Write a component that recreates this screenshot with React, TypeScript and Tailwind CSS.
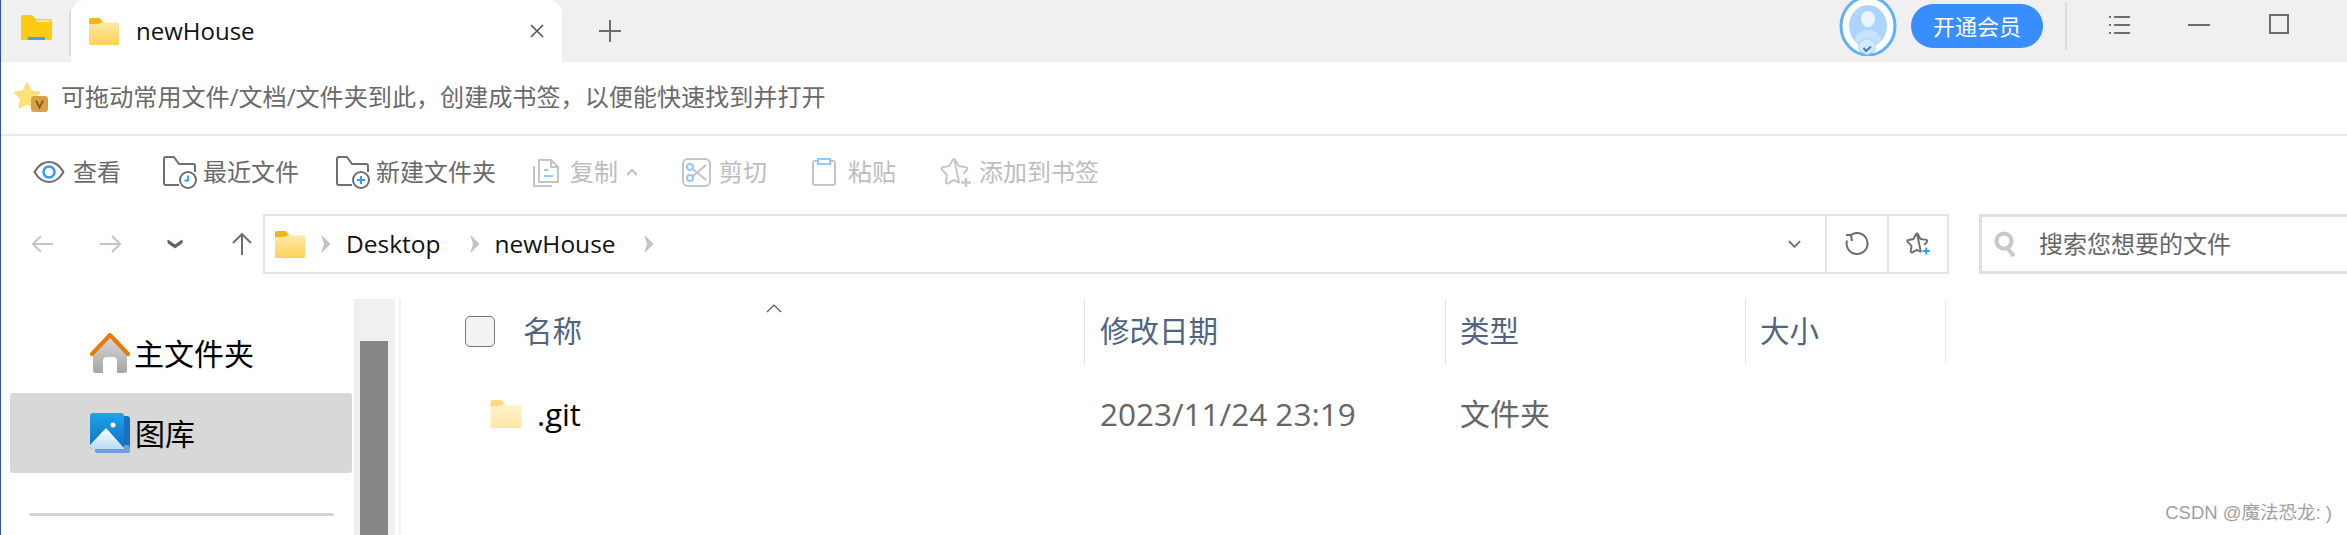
import type { ReactNode } from "react";

function TabFolder({ pale = false, className = "" }: { pale?: boolean; className?: string }) {
  const id = pale ? "folderPale" : "folderGold";
  return (
    <svg viewBox="0 0 30 27" className={className}>
      <defs>
        <linearGradient id={id} x1="0" y1="0" x2="0" y2="1">
          <stop offset="0" stopColor={pale ? "#fff3cf" : "#ffe9a6"} />
          <stop offset="1" stopColor={pale ? "#ffe6a6" : "#fdd25a"} />
        </linearGradient>
      </defs>
      <path d="M0 2a2 2 0 0 1 2-2h7.5c1 0 1.8.5 2.4 1.2L14 4v3H0z" fill={pale ? "#fcd882" : "#f6b611"} />
      <path d="M0 7c0-.5.4-1 1-1h8l3-1.500h17a1 1 0 0 1 1 1V26a1 1 0 0 1-1 1H1a1 1 0 0 1-1-1z" fill={`url(#${id})`} />
    </svg>
  );
}

function AppFolder() {
  return (
    <svg viewBox="0 0 31 25" className="h-[25px] w-[31px]">
      <path d="M0 2a2 2 0 0 1 2-2h9l4 4h14a2 2 0 0 1 2 2v17a2 2 0 0 1-2 2H2a2 2 0 0 1-2-2z" fill="#ffcb12" />
      <path d="M14 5h15v2H16z" fill="#ffe88a" />
      <path d="M7 22h17v3H7z" fill="#4b9df2" />
    </svg>
  );
}

function BookmarkStar() {
  return (
    <svg viewBox="0 0 34 30" className="h-[30px] w-[34px]">
      <path d="M13 1l4 8 9 1.500-6.500 6.500 1.500 9-8-4.200-8 4.200 1.500-9L0 10.500 9 9z" fill="#ffe27a" stroke="#ffd75c" strokeLinejoin="round" />
      <rect x="17" y="14" width="17" height="16" rx="3" fill="#d9a045" />
      <path d="M22 18.500l3.500 7 3.500-7" fill="none" stroke="#8a5a14" strokeWidth="1.800" />
    </svg>
  );
}

function Avatar() {
  return (
    <svg viewBox="0 0 58 56" className="h-[56px] w-[58px]">
      <ellipse cx="29" cy="26" rx="27" ry="29" fill="#fff" stroke="#63b0fa" strokeWidth="3" />
      <ellipse cx="29" cy="26" rx="19" ry="21" fill="#acd6ff" />
      <ellipse cx="29" cy="19" rx="7" ry="8" fill="#e8f4ff" />
      <path d="M16 40c2-8 8-10 13-10s11 2 13 10c-4 5-22 5-26 0z" fill="#c6e2ff" />
      <path d="M28 43l8 4.500v8L28 60l-8-4.500v-8z" fill="#d4eaff" stroke="#9fcfff" transform="translate(0 -5)" />
      <path d="M24.500 48l2.500 3 5-4.500" fill="none" stroke="#3f7fc0" strokeWidth="2" />
    </svg>
  );
}

function EyeIcon() {
  return (
    <svg viewBox="0 0 32 24" className="h-[24px] w-[32px]">
      <path d="M1.500 12C5 6 10 2 16 2s11 4 14.500 10C27 18 22 22 16 22S5 18 1.500 12z" fill="none" stroke="#6b6b6b" strokeWidth="2" strokeLinejoin="round" />
      <circle cx="16" cy="12" r="5.500" fill="none" stroke="#2f9bff" strokeWidth="2.500" />
    </svg>
  );
}

function FolderBadge({ plus = false }: { plus?: boolean }) {
  return (
    <svg viewBox="0 0 34 33" className="h-[33px] w-[34px]">
      <path d="M16 29H3a2 2 0 0 1-2-2V3a2 2 0 0 1 2-2h8l5 7h14a2 2 0 0 1 2 2v6" fill="none" stroke="#6f6f6f" strokeWidth="2" strokeLinejoin="round" />
      <circle cx="25" cy="24" r="8" fill="#fff" stroke="#6f6f6f" strokeWidth="2" />
      {plus ? (
        <path d="M25 20v8M21 24h8" stroke="#2f9bff" strokeWidth="2" />
      ) : (
        <path d="M25 19.500v5h-3.500" fill="none" stroke="#2f9bff" strokeWidth="1.800" />
      )}
    </svg>
  );
}

function CopyIcon() {
  return (
    <svg viewBox="0 0 27 30" className="h-[30px] w-[27px]">
      <path d="M6 3h12l7 7v15H6z" fill="none" stroke="#c4c4c4" strokeWidth="2" strokeLinejoin="round" />
      <path d="M18 3v7h7" fill="none" stroke="#c4c4c4" strokeWidth="2" />
      <path d="M1 9v20h18" fill="none" stroke="#c4c4c4" strokeWidth="2" />
      <path d="M11 13h4M11 19h9" stroke="#8ccbff" strokeWidth="2" />
    </svg>
  );
}

function ScissorsIcon() {
  return (
    <svg viewBox="0 0 29 29" className="h-[29px] w-[29px]">
      <rect x="1" y="1" width="27" height="27" rx="5" fill="none" stroke="#c4c4c4" strokeWidth="2" />
      <circle cx="8" cy="9" r="3" fill="none" stroke="#8ccbff" strokeWidth="2" />
      <circle cx="8" cy="20" r="3" fill="none" stroke="#8ccbff" strokeWidth="2" />
      <path d="M11 11l13 11M11 18L24 7" fill="none" stroke="#c4c4c4" strokeWidth="2" />
    </svg>
  );
}

function ClipboardIcon() {
  return (
    <svg viewBox="0 0 24 28" className="h-[28px] w-[24px]">
      <rect x="1" y="3" width="22" height="24" rx="2" fill="none" stroke="#c4c4c4" strokeWidth="2" />
      <rect x="6" y="1" width="12" height="5" fill="#fff" stroke="#8ccbff" strokeWidth="2" />
    </svg>
  );
}

function StarPlus({ blue = false }: { blue?: boolean }) {
  const stroke = blue ? "#6f6f6f" : "#c8c8c8";
  return (
    <svg viewBox="0 0 32 31" className={blue ? "h-[24px] w-[25px]" : "h-[31px] w-[32px]"}>
      <path
        d="M14 2c.6 0 1 .4 1.300 1L18.500 9l7.500 1.200c1.500.3 1.800 1.700.8 2.800L24 16M19 25.500l-5-2.500-6 3.300c-1.200.6-2.300-.2-2.100-1.500L7 18l-5-5.200c-.9-1-.4-2.300.9-2.500l6.600-1.200 3-6C12.900 2.400 13.400 2 14 2z"
        fill="none"
        stroke={stroke}
        strokeWidth={blue ? 2.500 : 2}
        strokeLinejoin="round"
        strokeLinecap="round"
      />
      <path d={blue ? "M26 20v9M21.500 24.500h9" : "M26 21v9M21 25.500h10"} stroke={blue ? "#2f9bff" : "#c8c8c8"} strokeWidth="2.500" />
    </svg>
  );
}

function Crumb() {
  return (
    <svg viewBox="0 0 10 16" className="h-[16px] w-[10px]">
      <path d="M1 0l8 8-8 8 2.500-8z" fill="#c4c4c4" stroke="#c4c4c4" strokeWidth="1" strokeLinejoin="round" />
    </svg>
  );
}

function HomeIcon() {
  return (
    <svg viewBox="0 0 40 40" className="h-[40px] w-[40px]">
      <defs>
        <linearGradient id="homeBody" x1="0" y1="0" x2="0" y2="1">
          <stop offset="0" stopColor="#d8d8d8" />
          <stop offset="1" stopColor="#a6a6a6" />
        </linearGradient>
      </defs>
      <path d="M3 20L20 4l17 16v17a3 3 0 0 1-3 3h-7V28a4 4 0 0 0-4-4h-6a4 4 0 0 0-4 4v12H6a3 3 0 0 1-3-3z" fill="url(#homeBody)" />
      <path d="M2 21L20 2l18 19" fill="none" stroke="#e97a06" strokeWidth="4" strokeLinecap="round" strokeLinejoin="round" />
    </svg>
  );
}

function GalleryIcon() {
  return (
    <svg viewBox="0 0 40 40" className="h-[40px] w-[40px]">
      <defs>
        <linearGradient id="galSky" x1="0" y1="0" x2="0" y2="1">
          <stop offset="0" stopColor="#1fa4ea" />
          <stop offset="1" stopColor="#0b6fc4" />
        </linearGradient>
        <linearGradient id="galHill" x1="0" y1="0" x2="0" y2="1">
          <stop offset="0" stopColor="#ffffff" />
          <stop offset="1" stopColor="#b9dcf8" />
        </linearGradient>
      </defs>
      <rect x="5" y="3" width="35" height="37" rx="3" fill="#1a6fc0" />
      <rect x="5" y="32" width="35" height="8" rx="3" fill="#6aa2d8" />
      <rect x="0" y="0" width="34" height="36" rx="3" fill="url(#galSky)" />
      <circle cx="23" cy="12" r="2.500" fill="#fff" />
      <path d="M0 32l16-17 18 20v1H3a3 3 0 0 1-3-3z" fill="url(#galHill)" />
    </svg>
  );
}

function ToolItem({ icon, label, gap = "gap-[8px]", off = false, className = "" }: { icon: ReactNode; label: string; gap?: string; off?: boolean; className?: string }) {
  return (
    <div className={`flex items-center ${gap} ${className}`}>
      {icon}
      <span className={`text-[24px] leading-none ${off ? "text-[#bdbdbd]" : "text-[#6a6a6a]"}`}>{label}</span>
    </div>
  );
}

export default function App() {
  return (
    <div className="relative flex h-[535px] w-[2347px] flex-col overflow-hidden border-l border-[#3350a8] bg-white font-['Open_Sans','Noto_Sans_CJK_SC',sans-serif]">
      {/* Title bar */}
      <div className="flex h-[62px] items-stretch bg-[#f0f0f0]">
        <div className="flex items-start pl-[20px] pt-[15px]">
          <AppFolder />
        </div>
        <div className="ml-[17px] mt-[10px] h-[46px] w-[2px] bg-[#dcdcdc]" />
        <div className="flex w-[491px] items-center rounded-t-[14px] bg-white pl-[18px]">
          <TabFolder className="h-[27px] w-[30px]" />
          <span className="ml-[17px] text-[24px] text-[#111]">newHouse</span>
          <svg viewBox="0 0 14 14" className="ml-auto mr-[18px] h-[14px] w-[14px]">
            <path d="M1 1l12 12M13 1L1 13" stroke="#555" strokeWidth="1.600" />
          </svg>
        </div>
        <div className="ml-[37px] flex items-center">
          <svg viewBox="0 0 22 22" className="h-[22px] w-[22px]">
            <path d="M11 0v22M0 11h22" stroke="#6d6d6d" strokeWidth="2" />
          </svg>
        </div>
        <div className="ml-auto flex items-start pr-[58px]">
          <Avatar />
          <div className="ml-[14px] mt-[4px] flex h-[44px] w-[132px] items-center justify-center rounded-full bg-[#388eff] text-[22px] text-white">
            开通会员
          </div>
          <div className="ml-[22px] mt-[2px] h-[48px] w-[2px] bg-[#dcdcdc]" />
          <svg viewBox="0 0 21 18" className="ml-[42px] mt-[16px] h-[18px] w-[21px]">
            <path d="M0 1h2M5 1h16M0 9h2M5 9h16M0 17h2M5 17h16" stroke="#6d6d6d" strokeWidth="2" />
          </svg>
          <div className="ml-[58px] mt-[24px] h-[2px] w-[22px] bg-[#6d6d6d]" />
          <div className="ml-[59px] mt-[14px] h-[20px] w-[20px] border-2 border-[#6d6d6d]" />
        </div>
      </div>

      {/* Bookmark hint */}
      <div className="flex h-[74px] items-center border-b-2 border-[#e8e8e8] pb-[2px] pl-[13px]">
        <BookmarkStar />
        <span className="ml-[13px] text-[24.1px] text-[#6a6a6a]">可拖动常用文件/文档/文件夹到此，创建成书签，以便能快速找到并打开</span>
      </div>

      {/* Toolbar */}
      <div className="flex h-[78px] items-center pb-[6px] pl-[32px]">
        <ToolItem icon={<EyeIcon />} label="查看" gap="gap-[8px]" />
        <ToolItem icon={<FolderBadge />} label="最近文件" gap="gap-[6px]" className="ml-[42px]" />
        <ToolItem icon={<FolderBadge plus />} label="新建文件夹" gap="gap-[6px]" className="ml-[37px]" />
        <ToolItem icon={<CopyIcon />} label="复制" gap="gap-[10px]" off className="ml-[37px]" />
        <svg viewBox="0 0 12 7" className="ml-[8px] h-[7px] w-[12px]">
          <path d="M1 6l5-5 5 5" fill="none" stroke="#bdbdbd" strokeWidth="2" />
        </svg>
        <ToolItem icon={<ScissorsIcon />} label="剪切" gap="gap-[8px]" off className="ml-[44px]" />
        <ToolItem icon={<ClipboardIcon />} label="粘贴" gap="gap-[12px]" off className="ml-[45px]" />
        <ToolItem icon={<StarPlus />} label="添加到书签" gap="gap-[7px]" off className="ml-[44px]" />
      </div>

      {/* Address row */}
      <div className="flex h-[60px] items-center pl-[31px]">
        <svg viewBox="0 0 22 18" className="h-[18px] w-[22px]">
          <path d="M21 9H1M9 1L1 9l8 8" fill="none" stroke="#c4c4c4" strokeWidth="2" />
        </svg>
        <svg viewBox="0 0 22 18" className="ml-[45px] h-[18px] w-[22px]">
          <path d="M1 9h20M13 1l8 8-8 8" fill="none" stroke="#c4c4c4" strokeWidth="2" />
        </svg>
        <svg viewBox="0 0 16 10" className="ml-[46px] h-[10px] w-[16px]">
          <path d="M1 1l7 5 7-5v3l-7 5-7-5z" fill="#636363" stroke="#636363" />
        </svg>
        <svg viewBox="0 0 20 22" className="ml-[49px] h-[22px] w-[20px]">
          <path d="M10 22V1M1 10l9-9 9 9" fill="none" stroke="#6d6d6d" strokeWidth="2" />
        </svg>
        <div className="ml-[11px] flex h-[60px] w-[1686px] items-center border-2 border-[#e6e6e6] pl-[10px]">
          <TabFolder className="h-[27px] w-[30px]" />
          <div className="ml-[16px]"><Crumb /></div>
          <span className="ml-[15px] text-[24.5px] text-[#111]">Desktop</span>
          <div className="ml-[29px]"><Crumb /></div>
          <span className="ml-[15px] text-[24.5px] text-[#111]">newHouse</span>
          <div className="ml-[28px]"><Crumb /></div>
          <svg viewBox="0 0 14 8" className="ml-auto mr-[24px] h-[8px] w-[13px]">
            <path d="M1 1l6 6 6-6" fill="none" stroke="#6d6d6d" strokeWidth="2" />
          </svg>
          <div className="flex h-full w-[62px] items-center justify-center border-l-2 border-[#e6e6e6]">
            <svg viewBox="0 0 24 24" className="h-[24px] w-[24px]">
              <path d="M6 3c2-1.500 4-2 6-2a10.500 10.500 0 1 1-10 7.500M1 3l5 0 1 6" fill="none" stroke="#6d6d6d" strokeWidth="2" />
            </svg>
          </div>
          <div className="flex h-full w-[60px] items-center justify-center border-l-2 border-[#e6e6e6]">
            <StarPlus blue />
          </div>
        </div>
        <div className="ml-[30px] flex h-[60px] flex-1 items-center border-y-[3px] border-l-[3px] border-[#e0e0e0] pl-[12px]">
          <svg viewBox="0 0 22 26" className="h-[26px] w-[22px]">
            <circle cx="10" cy="10" r="7.500" fill="none" stroke="#c8c8c8" strokeWidth="4" />
            <path d="M14 18l6 7" stroke="#c8c8c8" strokeWidth="4" />
          </svg>
          <span className="ml-[23px] text-[24px] text-[#666]">搜索您想要的文件</span>
        </div>
      </div>

      {/* Body */}
      <div className="mt-[25px] flex flex-1 overflow-hidden">
        <div className="w-[353px] pl-[9px] pt-[14px]">
          <div className="flex h-[80px] items-center pl-[80px]">
            <HomeIcon />
            <span className="ml-[4px] text-[30px] text-black">主文件夹</span>
          </div>
          <div className="flex h-[80px] w-[342px] items-center rounded-[3px] bg-[#d8d8d8] pl-[80px]">
            <GalleryIcon />
            <span className="ml-[5px] text-[30px] text-black">图库</span>
          </div>
          <div className="ml-[19px] mt-[40px] h-[3px] w-[305px] rounded-full bg-[#d4d4d4]" />
        </div>
        <div className="w-[41px] bg-[#f0f0f0] px-[6px] pt-[42px]">
          <div className="h-full w-[28px] bg-[#868686]" />
        </div>
        <div className="ml-[4px] w-[2px] bg-[#f2f2f2]" />
        <div className="relative flex-1">
          <div className="grid h-[65px] grid-cols-[683px_361px_300px_200px_1fr] items-stretch text-[29.5px] text-[#51647f]">
            <div className="flex items-center pl-[64px]">
              <div className="h-[31px] w-[30px] rounded-[5px] border-[1.5px] border-[#777] bg-[#f3f3f3]" />
              <span className="ml-[28px]">名称</span>
            </div>
            <div className="flex items-center border-l border-[#e4e4e4] pl-[15px]">修改日期</div>
            <div className="flex items-center border-l border-[#e4e4e4] pl-[14px]">类型</div>
            <div className="flex items-center border-l border-[#e4e4e4] pl-[14px]">大小</div>
            <div className="border-l border-[#ececec]" />
          </div>
          <svg viewBox="0 0 16 9" className="absolute left-[365px] top-[5px] h-[9px] w-[16px]">
            <path d="M1 8l7-7 7 7" fill="none" stroke="#555" strokeWidth="1.200" />
          </svg>
          <div className="grid h-[100px] grid-cols-[683px_361px_300px_200px_1fr] items-center text-[#666]">
            <div className="flex items-center pl-[87px]">
              <TabFolder pale className="h-[28px] w-[36px]" />
              <span className="ml-[13px] text-[31px] leading-none text-black">.git</span>
            </div>
            <div className="pl-[16px] text-[31.5px] leading-none">2023/11/24 23:19</div>
            <div className="pl-[15px] text-[30px] leading-none">文件夹</div>
          </div>
        </div>
      </div>

      {/* Watermark */}
      <div className="absolute bottom-[8px] right-[15px] font-['Liberation_Sans','Noto_Sans_CJK_SC',sans-serif] text-[18.5px] text-[#a0a0a0]">CSDN @魔法恐龙: )</div>
    </div>
  );
}
